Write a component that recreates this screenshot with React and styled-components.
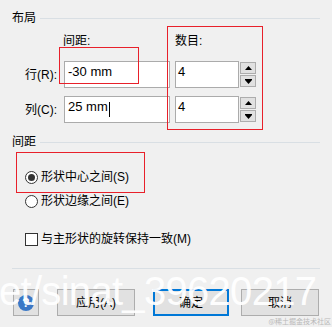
import React from "react";
import styled, { createGlobalStyle } from "styled-components";

const GlobalStyle = createGlobalStyle`
  html, body { margin: 0; padding: 0; background: #f0f0f0; }
  body { width: 332px; height: 327px; overflow: hidden; }
`;

const Dialog = styled.div`
  position: relative;
  width: 332px;
  height: 327px;
  box-sizing: border-box;
  padding: 11px 12px 0 12px;
  font-family: "Liberation Sans", "Noto Sans CJK SC", sans-serif;
  font-size: 12px;
  color: #000;
  background: #f0f0f0;
  display: flex;
  flex-direction: column;
  overflow: hidden;
`;

const SectionHeader = styled.div`
  display: flex;
  align-items: center;
  gap: 4px;
  height: 14px;
  line-height: 14px;
  margin-top: ${(p) => p.$mt || 0}px;
  &::after {
    content: "";
    flex: 1;
    height: 1px;
    background: #d9dfe4;
  }
`;

const FieldGrid = styled.div`
  display: grid;
  grid-template-columns: 34px 106px 81px;
  column-gap: 5px;
  row-gap: 8px;
  align-items: center;
  margin: 9px 0 0 13px;
`;

const ColumnTitle = styled.div`
  height: 14px;
  line-height: 14px;
  margin-bottom: 5px;
  margin-left: ${(p) => p.$ml || 0}px;
`;

const FieldLabel = styled.div`
  line-height: 14px;
  white-space: nowrap;
`;

const TextBox = styled.div`
  box-sizing: border-box;
  height: 27px;
  width: ${(p) => p.$w}px;
  border: 1px solid #ababab;
  background: #fff;
  padding: 2px 0 0 ${(p) => p.$pl ?? 3}px;
  font-family: "Liberation Sans", sans-serif;
  font-size: 13px;
  line-height: 15px;
  display: flex;
  align-items: flex-start;
  white-space: pre;
`;

const Caret = styled.span`
  display: inline-block;
  width: 1px;
  height: 15px;
  margin-left: 1px;
  margin-top: 3px;
  background: #000;
`;

const NumberField = styled.div`
  display: flex;
  gap: 1px;
  align-items: flex-start;
`;

const Spinner = styled.div`
  display: flex;
  flex-direction: column;
  gap: 1px;
  padding-top: 1px;
`;

const SpinButton = styled.div`
  box-sizing: border-box;
  width: 16px;
  height: 12px;
  background: #e1e1e1;
  border: 1px solid #adadad;
  display: flex;
  align-items: center;
  justify-content: center;
`;

const OptionList = styled.div`
  display: flex;
  flex-direction: column;
  gap: 8px;
  margin: ${(p) => p.$mt}px 0 0 13px;
`;

const Option = styled.div`
  display: flex;
  align-items: center;
  gap: 3px;
  height: 16px;
  line-height: 16px;
`;

const Radio = styled.span`
  box-sizing: border-box;
  width: 13px;
  height: 13px;
  border: 1px solid #333;
  border-radius: 50%;
  background: #fff;
  display: flex;
  align-items: center;
  justify-content: center;
  &::after {
    content: "";
    width: 7px;
    height: 7px;
    border-radius: 50%;
    background: ${(p) => (p.$checked ? "#333" : "transparent")};
  }
`;

const CheckBox = styled.span`
  box-sizing: border-box;
  width: 13px;
  height: 13px;
  border: 1px solid #333;
  background: #fff;
`;

const Separator = styled.div`
  height: 1px;
  background: #d9dfe4;
  margin-top: 21px;
`;

const ButtonRow = styled.div`
  display: flex;
  gap: 18px;
  margin: 20px 0 0 1px;
`;

const Button = styled.div`
  box-sizing: border-box;
  width: ${(p) => p.$w}px;
  height: 27px;
  margin-left: ${(p) => p.$ml || 0}px;
  background: #e1e1e1;
  border: ${(p) => (p.$primary ? "2px solid #0078d7" : "1px solid #adadad")};
  display: flex;
  align-items: center;
  justify-content: center;
  line-height: 14px;
`;

const HelpIcon = styled.span`
  width: 16px;
  height: 16px;
  border-radius: 50%;
  background: #3b78c6;
  color: #fff;
  font-weight: bold;
  font-size: 12px;
  line-height: 16px;
  text-align: center;
  margin-top: 1px;
`;

const Annotation = styled.div`
  position: absolute;
  left: ${(p) => p.$x}px;
  top: ${(p) => p.$y}px;
  width: ${(p) => p.$w}px;
  height: ${(p) => p.$h}px;
  box-sizing: border-box;
  border: 1px solid #e8202a;
  pointer-events: none;
`;

const Watermark = styled.div`
  position: absolute;
  left: -1px;
  top: 271px;
  font-family: "Liberation Sans", sans-serif;
  font-size: 40px;
  line-height: 40px;
  letter-spacing: -0.7px;
  color: rgba(255, 255, 255, 0.95);
  white-space: nowrap;
  pointer-events: none;
`;

const SourceTag = styled.div`
  position: absolute;
  right: 1px;
  bottom: 2px;
  font-family: "Noto Sans CJK SC", sans-serif;
  font-size: 7px;
  line-height: 8px;
  color: #b9b9b9;
  white-space: nowrap;
`;

const UpArrow = () => (
  <svg width="7" height="4" viewBox="0 0 7 4">
    <polygon points="3.5,0 7,4 0,4" fill="#000" />
  </svg>
);

const DownArrow = () => (
  <svg width="7" height="5" viewBox="0 0 7 5">
    <rect x="0" y="0" width="7" height="1" fill="#000" />
    <polygon points="0,1 7,1 3.5,5" fill="#000" />
  </svg>
);

const NumberInput = ({ value }) => (
  <NumberField>
    <TextBox $w={64} $pl={2}>{value}</TextBox>
    <Spinner>
      <SpinButton><UpArrow /></SpinButton>
      <SpinButton><DownArrow /></SpinButton>
    </Spinner>
  </NumberField>
);

export default function App() {
  return (
    <>
      <GlobalStyle />
      <Dialog>
        <SectionHeader>布局</SectionHeader>
        <FieldGrid>
          <div />
          <ColumnTitle $ml={-1}>间距:</ColumnTitle>
          <ColumnTitle>数目:</ColumnTitle>

          <FieldLabel>行(R):</FieldLabel>
          <TextBox $w={106}>-30 mm</TextBox>
          <NumberInput value="4" />

          <FieldLabel>列(C):</FieldLabel>
          <TextBox $w={106}>25 mm<Caret /></TextBox>
          <NumberInput value="4" />
        </FieldGrid>

        <SectionHeader $mt={12}>间距</SectionHeader>
        <OptionList $mt={20}>
          <Option><Radio $checked />形状中心之间(S)</Option>
          <Option><Radio />形状边缘之间(E)</Option>
        </OptionList>
        <OptionList $mt={22}>
          <Option><CheckBox />与主形状的旋转保持一致(M)</Option>
        </OptionList>

        <Separator />
        <ButtonRow>
          <Button $w={26}><HelpIcon>?</HelpIcon></Button>
          <Button $w={78}>应用(A)</Button>
          <Button $w={76} $primary>确定</Button>
          <Button $w={78} $ml={-6}>取消</Button>
        </ButtonRow>

        <Annotation $x={59} $y={47} $w={80} $h={37} />
        <Annotation $x={167} $y={26} $w={96} $h={104} />
        <Annotation $x={16} $y={152} $w={129} $h={41} />

        <Watermark>et/sinat_39620217</Watermark>
        <SourceTag>@稀土掘金技术社区</SourceTag>
      </Dialog>
    </>
  );
}
